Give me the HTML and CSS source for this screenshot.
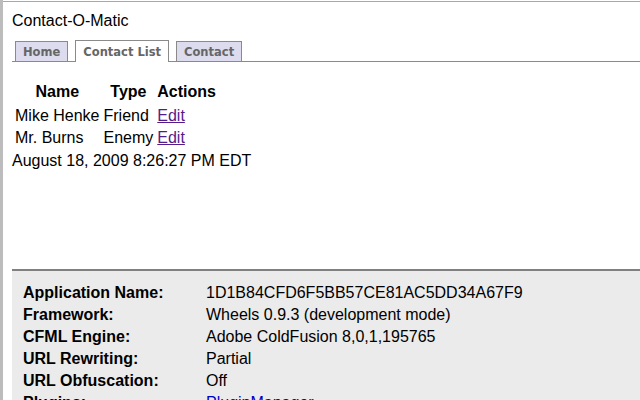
FILE: index.html
```html
<!DOCTYPE html>
<html>
<head>
<meta charset="utf-8">
<title>Contact-O-Matic</title>
<link rel="stylesheet" href="styles.css">
</head>
<body>
<div class="window">
  <div class="content">
    <div class="title">Contact-O-Matic</div>
    <ul class="tabs">
      <li class="tab">Home</li>
      <li class="tab active">Contact List</li>
      <li class="tab">Contact</li>
    </ul>
    <table class="contacts">
      <tr><th>Name</th><th>Type</th><th>Actions</th></tr>
      <tr><td>Mike Henke</td><td>Friend</td><td><a href="#" class="visited">Edit</a></td></tr>
      <tr><td>Mr. Burns</td><td>Enemy</td><td><a href="#" class="visited">Edit</a></td></tr>
    </table>
    <div class="date">August 18, 2009 8:26:27 PM EDT</div>
    <div class="debug">
      <div class="label">Application Name:</div><div class="value">1D1B84CFD6F5BB57CE81AC5DD34A67F9</div>
      <div class="label">Framework:</div><div class="value">Wheels 0.9.3 (development mode)</div>
      <div class="label">CFML Engine:</div><div class="value">Adobe ColdFusion 8,0,1,195765</div>
      <div class="label">URL Rewriting:</div><div class="value">Partial</div>
      <div class="label">URL Obfuscation:</div><div class="value">Off</div>
      <div class="label">Plugins:</div><div class="value"><a href="#" class="plink">PluginManager</a></div>
    </div>
  </div>
</div>
</body>
</html>
```

FILE: styles.css
```css
html, body {
  margin: 0;
  padding: 0;
  background: #fff;
}
body {
  font-family: "Liberation Sans", Arial, sans-serif;
  font-size: 16px;
  color: #000;
}
.window {
  border-left: 3px solid #bcbcbc;
  padding-top: 1px;
  height: 400px;
  box-sizing: border-box;
  overflow: hidden;
}
.content {
  border-top: 1px solid #a8a8a8;
  padding-left: 9px;
}
.title {
  line-height: 18px;
  padding-top: 10px;
}
.tabs {
  list-style: none;
  margin: 10px 0 0 0;
  padding: 0 0 0 3px;
  display: flex;
  align-items: flex-end;
  gap: 7px;
  border-bottom: 1px solid #8a8a8a;
}
.tab {
  box-sizing: border-box;
  height: 20px;
  padding: 2px 7px 0 7px;
  border: 1px solid #8a8a8a;
  border-bottom: none;
  background: #dcdcee;
  color: #666;
  font-family: "DejaVu Sans", Verdana, sans-serif;
  font-weight: bold;
  font-size: 11.5px;
  line-height: 16px;
}
.tab.active {
  height: 22px;
  margin-bottom: -1px;
  padding-top: 3px;
  background: #fff;
}
.contacts {
  margin-top: 18px;
  border-spacing: 2px;
}
.contacts th {
  padding: 1px 1px 3px 1px;
  font-weight: bold;
}
.contacts td {
  padding: 1px;
  text-align: left;
}
.visited {
  color: #551a8b;
}
.date {
  margin-top: 2px;
}
.debug {
  margin-top: 99px;
  border-top: 2px solid #808080;
  background: #ebebeb;
  padding: 11px 11px 12px 11px;
  display: grid;
  grid-template-columns: 183px 1fr;
  line-height: 22px;
}
.label {
  font-weight: bold;
}
.plink {
  color: #0000cc;
}
```
